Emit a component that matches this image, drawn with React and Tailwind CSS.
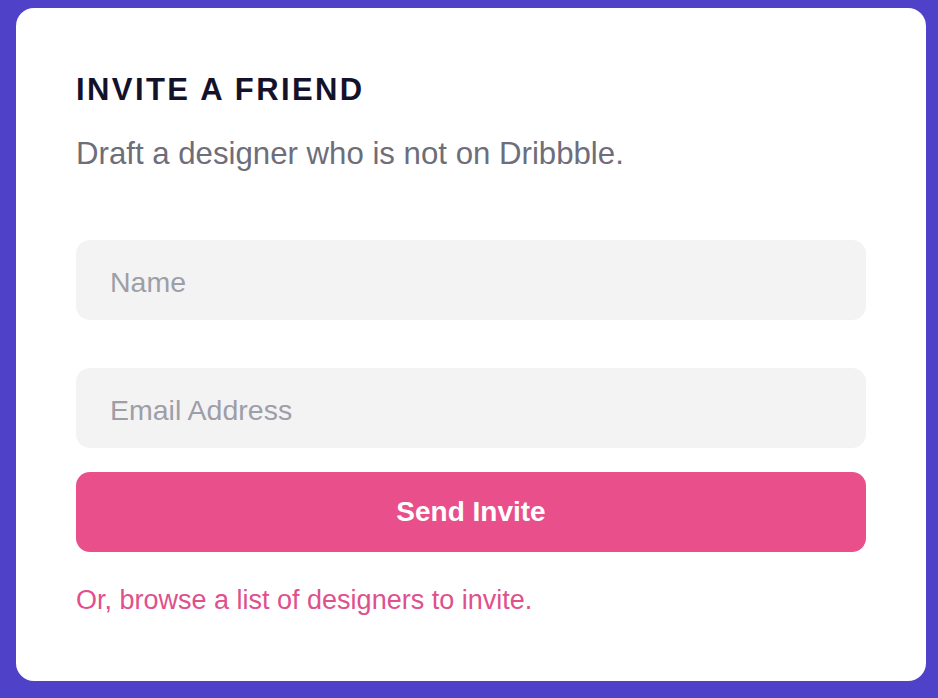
import React from "react";

const InviteFriend = () => {
  return (
    <div
      className="w-[938px] h-[698px] bg-[#4f42c9] pt-2 pl-4 pr-3 pb-[17px]"
      style={{ fontFamily: '"Liberation Sans", Arial, sans-serif' }}
    >
      <div className="h-full w-full bg-white rounded-[18px] px-[60px] pt-[64px] flex flex-col">
        <h1 className="text-[31px] leading-[36px] font-bold tracking-[2.4px] text-[#14122b]">
          INVITE A FRIEND
        </h1>
        <p className="mt-[28px] text-[31.2px] leading-[36px] text-[#6e6d7a]">
          Draft a designer who is not on Dribbble.
        </p>

        <input
          type="text"
          placeholder="Name"
          className="mt-[68px] h-[80px] w-full rounded-[14px] bg-[#f3f3f4] px-[34px] pt-[4px] text-[28.5px] text-[#14122b] placeholder:text-[#9e9ea7] outline-none"
        />
        <input
          type="email"
          placeholder="Email Address"
          className="mt-[48px] h-[80px] w-full rounded-[14px] bg-[#f3f3f4] px-[34px] pt-[4px] text-[28.5px] text-[#14122b] placeholder:text-[#9e9ea7] outline-none"
        />

        <button className="mt-[24px] h-[80px] w-full rounded-[14px] bg-[#e84f8b] text-white text-[28px] font-bold">
          Send Invite
        </button>

        <a href="#" className="mt-[32px] text-[27px] leading-[32px] text-[#e0508c]">
          Or, browse a list of designers to invite.
        </a>
      </div>
    </div>
  );
};

export default function App() {
  return <InviteFriend />;
}
